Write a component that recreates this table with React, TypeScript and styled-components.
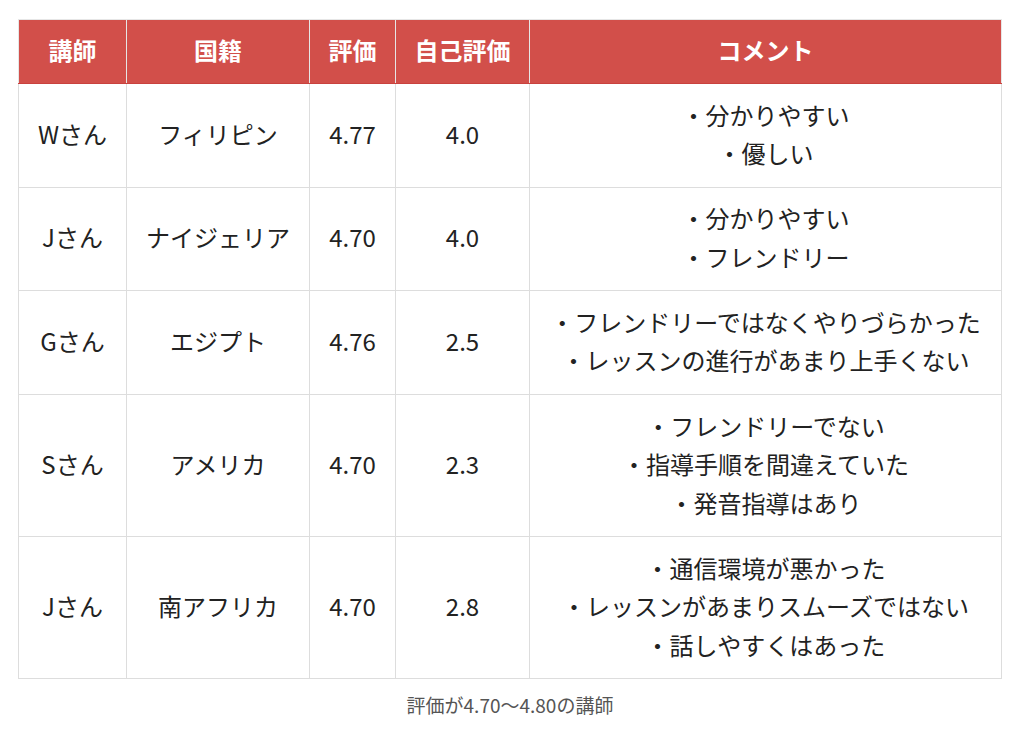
import React from 'react';
import styled, { createGlobalStyle } from 'styled-components';

const GlobalStyle = createGlobalStyle`
  body {
    margin: 0;
    background: #ffffff;
    font-family: 'Noto Sans CJK JP', 'Noto Sans', sans-serif;
    color: #222222;
  }
`;

type Teacher = {
  name: string;
  country: string;
  score: string;
  self: string;
  comments: string[];
};

const teachers: Teacher[] = [
  { name: 'Wさん', country: 'フィリピン', score: '4.77', self: '4.0', comments: ['・分かりやすい', '・優しい'] },
  { name: 'Jさん', country: 'ナイジェリア', score: '4.70', self: '4.0', comments: ['・分かりやすい', '・フレンドリー'] },
  {
    name: 'Gさん',
    country: 'エジプト',
    score: '4.76',
    self: '2.5',
    comments: ['・フレンドリーではなくやりづらかった', '・レッスンの進行があまり上手くない'],
  },
  {
    name: 'Sさん',
    country: 'アメリカ',
    score: '4.70',
    self: '2.3',
    comments: ['・フレンドリーでない', '・指導手順を間違えていた', '・発音指導はあり'],
  },
  {
    name: 'Jさん',
    country: '南アフリカ',
    score: '4.70',
    self: '2.8',
    comments: ['・通信環境が悪かった', '・レッスンがあまりスムーズではない', '・話しやすくはあった'],
  },
];

export default function App() {
  return (
    <Page>
      <GlobalStyle />
      <Figure>
        <Table>
          <colgroup>
            <col style={{ width: 108 }} />
            <col style={{ width: 183 }} />
            <col style={{ width: 86 }} />
            <col style={{ width: 134 }} />
            <col />
          </colgroup>
          <thead>
            <tr>
              <Th>講師</Th>
              <Th>国籍</Th>
              <Th>評価</Th>
              <Th>自己評価</Th>
              <Th>コメント</Th>
            </tr>
          </thead>
          <tbody>
            {teachers.map((t, i) => (
              <tr key={i}>
                <Td>{t.name}</Td>
                <Td>{t.country}</Td>
                <Td>{t.score}</Td>
                <Td>{t.self}</Td>
                <Td>
                  {t.comments.map((c) => (
                    <Line key={c}>{c}</Line>
                  ))}
                </Td>
              </tr>
            ))}
          </tbody>
        </Table>
        <Caption>評価が4.70〜4.80の講師</Caption>
      </Figure>
    </Page>
  );
}

const Page = styled.div`
  padding: 19px 22px 0 18px;
`;

const Figure = styled.figure`
  margin: 0;
  width: 984px;
`;

const Table = styled.table`
  width: 984px;
  border-collapse: collapse;
  table-layout: fixed;
`;

const Th = styled.th`
  box-sizing: border-box;
  height: 64px;
  padding: 0 0 4px;
  background: #d24f4a;
  color: #ffffff;
  font-size: 24px;
  line-height: 30px;
  font-weight: bold;
  text-align: center;
  border: 1px solid #e6e6e6;
  border-bottom: 1px solid #c9423e;
`;

const Td = styled.td`
  padding: 11.5px 2px 14.2px;
  font-size: 24px;
  line-height: 38.5px;
  text-align: center;
  vertical-align: middle;
  border: 1px solid #dddddd;
  color: #222222;
`;

const Line = styled.div`
  white-space: nowrap;
`;

const Caption = styled.figcaption`
  margin-top: 12px;
  text-align: center;
  font-size: 19px;
  color: #555555;
`;
